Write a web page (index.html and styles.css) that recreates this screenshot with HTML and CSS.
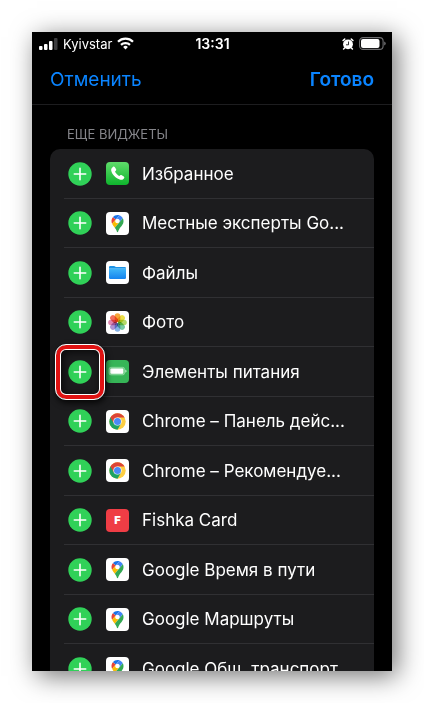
FILE: index.html
```html
<!DOCTYPE html>
<html lang="ru">
<head>
<meta charset="utf-8">
<meta name="viewport" content="width=device-width, initial-scale=1">
<title>Виджеты</title>
<link rel="stylesheet" href="styles.css">
</head>
<body>
<svg class="sprite" aria-hidden="true">
  <defs>
    <linearGradient id="phone-green" x1="0" y1="0" x2="0" y2="1"><stop offset="0" stop-color="#5fdc6b"/><stop offset="1" stop-color="#0fb52d"/></linearGradient>
    <linearGradient id="folder-blue" x1="0" y1="0" x2="0" y2="1"><stop offset="0" stop-color="#3fb6f8"/><stop offset="1" stop-color="#1583ee"/></linearGradient>
    <symbol id="plus" viewBox="0 0 24 24">
      <circle cx="12" cy="12" r="11.7" fill="#30d158"/>
      <path d="M12 6.3v11.4M6.3 12h11.4" stroke="#fff" stroke-width="1.6" stroke-linecap="round"/>
    </symbol>
    <symbol id="phone" viewBox="0 0 23 23">
      <rect width="23" height="23" rx="4" fill="url(#phone-green)"/>
      <path d="M6.900 4.900c.7-.6 1.300-.5 1.800.2l1.300 2c.4.7.3 1.200-.2 1.700l-.8.8c.5 1.500 2.700 3.800 4.300 4.500l.9-.8c.5-.5 1-.5 1.600-.1l2 1.400c.7.500.7 1.100.2 1.700-.9 1.200-2.100 1.900-3.700 1.400C9.700 16.400 6 12.500 5.200 8.500c-.2-1.500.5-2.700 1.700-3.600z" fill="#fff"/>
    </symbol>
    <symbol id="maps" viewBox="0 0 23 23">
      <rect width="23" height="23" rx="4" fill="#fff"/>
      <g transform="translate(5.500 3) scale(.13)">
        <path fill="#1a73e8" d="M60.200 2.200C55.800.8 51 0 46.100 0 32 0 19.300 6.400 10.800 16.500l21.800 18.300L60.200 2.200z"/>
        <path fill="#ea4335" d="M10.800 16.500C4.100 24.500 0 34.900 0 46.100c0 8.700 1.700 15.700 4.600 22l28-33.300-21.800-18.300z"/>
        <path fill="#4285f4" d="M46.200 28.500c9.800 0 17.700 7.900 17.700 17.700 0 4.300-1.600 8.300-4.200 11.400 0 0 13.900-16.600 27.500-32.700-5.600-10.800-15.300-19-27-22.700L32.600 34.800c3.300-3.800 8.100-6.300 13.600-6.300"/>
        <path fill="#fbbc04" d="M46.200 63.800c-9.800 0-17.700-7.900-17.700-17.700 0-4.300 1.500-8.300 4.100-11.300l-28 33.300c4.800 10.600 12.800 19.200 21 29.900l34.100-40.500c-3.300 3.900-8.100 6.300-13.500 6.300"/>
        <path fill="#34a853" d="M59.100 109.200c15.400-24.100 33.300-35 33.300-63 0-7.700-1.900-14.900-5.200-21.300L25.600 98c2.600 3.400 5.300 7.300 7.900 11.300 9.400 14.500 6.800 23.100 12.800 23.100s3.400-8.700 12.800-23.200"/>
      </g>
    </symbol>
    <symbol id="files" viewBox="0 0 23 23">
      <rect width="23" height="23" rx="4" fill="#fff"/>
      <path d="M3 6.200Q3 5 4.200 5H8q.7 0 1.200.5l.6.500h9Q20 6 20 7.200V9H3z" fill="#1c93e6"/>
      <path d="M3 7.800h17v9q0 1.200-1.200 1.200H4.200Q3 18 3 16.800z" fill="url(#folder-blue)"/>
      <path d="M3 7.600h17" stroke="#8fd6fb" stroke-width=".5"/>
    </symbol>
    <symbol id="photos" viewBox="0 0 23 23">
      <rect width="23" height="23" rx="4" fill="#fff"/>
      <g class="petals">
        <rect x="8.700" y="2.200" width="5.600" height="8.800" rx="2.800" fill="#f8a63a"/>
        <rect x="8.700" y="2.200" width="5.600" height="8.800" rx="2.800" fill="#ece04a" transform="rotate(45 11.500 11.500)"/>
        <rect x="8.700" y="2.200" width="5.600" height="8.800" rx="2.800" fill="#b4d968" transform="rotate(90 11.500 11.500)"/>
        <rect x="8.700" y="2.200" width="5.600" height="8.800" rx="2.800" fill="#77caa4" transform="rotate(135 11.500 11.500)"/>
        <rect x="8.700" y="2.200" width="5.600" height="8.800" rx="2.800" fill="#86b2e6" transform="rotate(180 11.500 11.500)"/>
        <rect x="8.700" y="2.200" width="5.600" height="8.800" rx="2.800" fill="#b094d4" transform="rotate(225 11.500 11.500)"/>
        <rect x="8.700" y="2.200" width="5.600" height="8.800" rx="2.800" fill="#e087b0" transform="rotate(270 11.500 11.500)"/>
        <rect x="8.700" y="2.200" width="5.600" height="8.800" rx="2.800" fill="#f3705e" transform="rotate(315 11.500 11.500)"/>
      </g>
    </symbol>
    <symbol id="battery" viewBox="0 0 23 23">
      <rect width="23" height="23" rx="4" fill="#36b557"/>
      <rect x="3" y="7.300" width="15.600" height="7.600" rx="2" fill="#69cc80" stroke="#a5e2b3" stroke-width=".6"/>
      <rect x="4.300" y="8.500" width="13" height="5.200" rx="1" fill="#fff"/>
      <path d="M19.300 9.400q1.300.5 1.300 1.700t-1.300 1.700z" fill="#c5edce"/>
    </symbol>
    <symbol id="chrome" viewBox="0 0 23 23">
      <rect width="23" height="23" rx="4" fill="#fff"/>
      <circle cx="11.500" cy="11.500" r="8.200" fill="#fdce42"/>
      <path d="M4.400 7.400A8.200 8.200 0 0 0 11.500 19.700L15.100 13.600 11.500 11.500z" fill="#1da362"/>
      <path d="M4.400 7.400A8.200 8.200 0 0 1 18.600 7.400H11.500L8 13.500z" fill="#dc4437"/>
      <circle cx="11.500" cy="11.500" r="4.100" fill="#fff"/>
      <circle cx="11.500" cy="11.500" r="3.500" fill="#4a8af4"/>
    </symbol>
  </defs>
</svg>

<main class="phone">
  <div class="status">
    <div class="carrier">
      <svg width="19" height="12" viewBox="0 0 19 12" aria-hidden="true">
        <g fill="#fff"><rect y="8" width="3.500" height="4" rx="1"/><rect x="5" y="6" width="3.500" height="6" rx="1"/><rect x="10" y="3" width="3.500" height="9" rx="1"/></g>
        <rect x="15" y="0" width="3.500" height="12" rx="1" fill="#3c3c3e"/>
      </svg>
      <span>Kyivstar</span>
      <svg width="17" height="13" viewBox="0 0 17 13" aria-hidden="true">
        <g fill="none" stroke="#fff" stroke-width="2.300"><path d="M1 4.700a10.700 10.700 0 0 1 15 0"/><path d="M4 7.900a6.500 6.500 0 0 1 9 0"/></g>
        <path d="M6.100 10a3.500 3.500 0 0 1 4.800 0l-2.400 2.600z" fill="#fff"/>
      </svg>
    </div>
    <time class="clock">13:31</time>
    <div class="indicators">
      <svg width="12" height="12" viewBox="0 0 12 12" aria-hidden="true">
        <circle cx="6" cy="6.300" r="4.900" fill="#fff"/>
        <path d="M1.100 2.500L2.700 1.100M10.900 2.500L9.300 1.100M2.600 10l-1 1M9.400 10l1 1" stroke="#fff" stroke-width="1.500" stroke-linecap="round"/>
        <path d="M6.500 3.500v3.300H4" fill="none" stroke="#000" stroke-width=".8"/>
      </svg>
      <svg width="27" height="13" viewBox="0 0 27 13" aria-hidden="true">
        <rect x=".6" y=".6" width="23.500" height="11.800" rx="3.500" fill="none" stroke="#6e6e70" stroke-width="1.100"/>
        <rect x="2" y="2" width="18.500" height="9" rx="2" fill="#fff"/>
        <path d="M25.200 4.500q1.500.6 1.500 2t-1.500 2z" fill="#6e6e70"/>
      </svg>
    </div>
  </div>
  <header class="toolbar">
    <button class="action" type="button">Отменить</button>
    <button class="action action-done" type="button">Готово</button>
  </header>
  <section class="content">
    <h2 class="heading">ЕЩЕ ВИДЖЕТЫ</h2>
    <ul class="list">
      <li class="row"><button class="add" type="button" aria-label="Добавить"><svg><use href="#plus"/></svg></button><div class="item"><svg class="icon"><use href="#phone"/></svg><span class="name">Избранное</span></div></li>
      <li class="row"><button class="add" type="button" aria-label="Добавить"><svg><use href="#plus"/></svg></button><div class="item"><svg class="icon"><use href="#maps"/></svg><span class="name">Местные эксперты Go...</span></div></li>
      <li class="row"><button class="add" type="button" aria-label="Добавить"><svg><use href="#plus"/></svg></button><div class="item"><svg class="icon"><use href="#files"/></svg><span class="name">Файлы</span></div></li>
      <li class="row"><button class="add" type="button" aria-label="Добавить"><svg><use href="#plus"/></svg></button><div class="item"><svg class="icon"><use href="#photos"/></svg><span class="name">Фото</span></div></li>
      <li class="row"><button class="add add-marked" type="button" aria-label="Добавить"><svg><use href="#plus"/></svg></button><div class="item"><svg class="icon"><use href="#battery"/></svg><span class="name">Элементы питания</span></div></li>
      <li class="row"><button class="add" type="button" aria-label="Добавить"><svg><use href="#plus"/></svg></button><div class="item"><svg class="icon"><use href="#chrome"/></svg><span class="name">Chrome – Панель дейс...</span></div></li>
      <li class="row"><button class="add" type="button" aria-label="Добавить"><svg><use href="#plus"/></svg></button><div class="item"><svg class="icon"><use href="#chrome"/></svg><span class="name">Chrome – Рекомендуе...</span></div></li>
      <li class="row"><button class="add" type="button" aria-label="Добавить"><svg><use href="#plus"/></svg></button><div class="item"><span class="icon icon-fishka">F</span><span class="name">Fishka Card</span></div></li>
      <li class="row"><button class="add" type="button" aria-label="Добавить"><svg><use href="#plus"/></svg></button><div class="item"><svg class="icon"><use href="#maps"/></svg><span class="name">Google Время в пути</span></div></li>
      <li class="row"><button class="add" type="button" aria-label="Добавить"><svg><use href="#plus"/></svg></button><div class="item"><svg class="icon"><use href="#maps"/></svg><span class="name">Google Маршруты</span></div></li>
      <li class="row"><button class="add" type="button" aria-label="Добавить"><svg><use href="#plus"/></svg></button><div class="item"><svg class="icon"><use href="#maps"/></svg><span class="name">Google Общ. транспорт</span></div></li>
    </ul>
  </section>
</main>
</body>
</html>
```
FILE: styles.css
```css
* { box-sizing: border-box; }

body {
  margin: 0;
  padding: 32px;
  background: #fff;
  font-family: Inter, "Liberation Sans", sans-serif;
  color: #fff;
}

.sprite {
  position: absolute;
  width: 0;
  height: 0;
}

.petals rect { mix-blend-mode: multiply; }

.phone {
  height: calc(100vh - 64px);
  overflow: hidden;
  background: #000;
  box-shadow: 5px 5px 24px rgba(0, 0, 0, 0.55);
}

.status {
  display: grid;
  grid-template-columns: 1fr auto 1fr;
  align-items: center;
  height: 23px;
  padding: 0 6px 0 7px;
  font-size: 13px;
  line-height: 16px;
}

.carrier,
.indicators {
  display: flex;
  align-items: center;
  gap: 5px;
}

.indicators { justify-content: flex-end; }

.clock {
  font-size: 14px;
  font-weight: 600;
}

.toolbar {
  display: flex;
  justify-content: space-between;
  align-items: center;
  height: 50px;
  padding: 0 18px;
  border-bottom: 1px solid #1d1d1f;
}

.action {
  padding: 0;
  border: 0;
  background: none;
  font: inherit;
  font-size: 19px;
  line-height: 24px;
  color: #0a84ff;
}

.action-done { font-weight: 600; }

.content { padding: 19px 18px 0; }

.heading {
  margin: 0;
  padding: 0 17px 5px;
  font-size: 13px;
  font-weight: 400;
  line-height: 20px;
  color: #85858a;
}

.list {
  margin: 0;
  padding: 0 0 0 18px;
  border-radius: 10px 10px 0 0;
  background: #1c1c1e;
  list-style: none;
}

.row {
  display: flex;
  align-items: center;
  gap: 14px;
  height: 50px;
  margin-left: -4px;
  padding-left: 4px;
  border-bottom: 1px solid #303033;
}

.row:nth-child(even) { height: 49px; }

.add {
  position: relative;
  flex: none;
  width: 24px;
  height: 24px;
  padding: 0;
  border: 0;
  border-radius: 50%;
  background: none;
}

.add svg {
  display: block;
  width: 24px;
  height: 24px;
}

.add-marked::after {
  content: "";
  position: absolute;
  inset: -16px -13px;
  border: 1px solid #fff;
  border-radius: 11px;
  box-shadow:
    inset 0 0 0 4px #e01212,
    inset 0 0 0 5px #fff,
    inset 2px 2px 8px 5px rgba(0, 0, 0, 0.7),
    1px 3px 6px rgba(0, 0, 0, 0.8);
}

.item {
  display: flex;
  align-items: center;
  gap: 13px;
  min-width: 0;
}

.icon {
  display: block;
  flex: none;
  width: 23px;
  height: 23px;
}

.icon-fishka {
  border-radius: 4px;
  background: #ef3d45;
  font-size: 11px;
  font-weight: 900;
  line-height: 23px;
  text-align: center;
}

.name {
  overflow: hidden;
  font-size: 17px;
  line-height: 24px;
  white-space: nowrap;
}
```
